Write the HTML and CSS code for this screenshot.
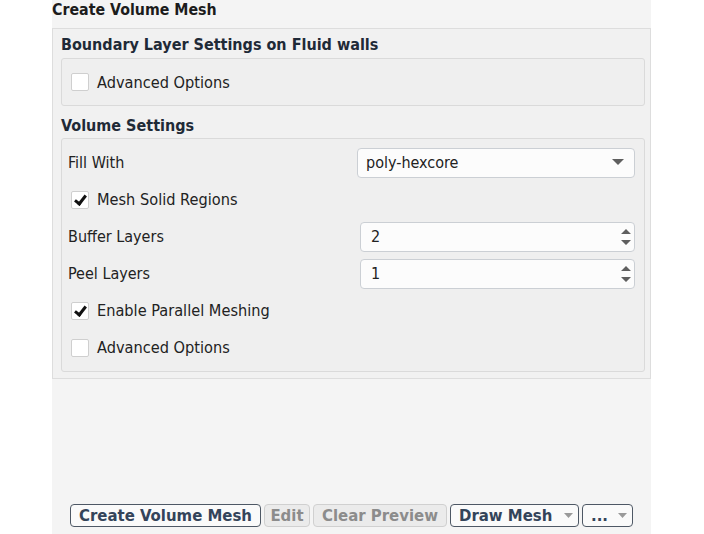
FILE: index.html
```html
<!DOCTYPE html>
<html lang="en">
<head>
  <meta charset="UTF-8">
  <title>Create Volume Mesh</title>
  <link rel="stylesheet" href="styles.css">
</head>
<body>
<div class="panel">
  <div class="panel-title">Create Volume Mesh</div>

  <div class="outer-group">
    <div class="group-title">Boundary Layer Settings on Fluid walls</div>
    <div class="group-box box-bl">
      <label class="check-row"><span class="check"></span>Advanced Options</label>
    </div>

    <div class="group-title title-vol">Volume Settings</div>
    <div class="group-box box-vol">
      <div class="row">
        <span class="label">Fill With</span>
        <div class="dropdown">
          <span>poly-hexcore</span>
          <svg width="12" height="7" viewBox="0 0 12 7"><path d="M0 0 H12 L6 6 Z" fill="#5f5f5f"/></svg>
        </div>
      </div>
      <div class="row">
        <label class="check-row"><span class="check on"></span>Mesh Solid Regions</label>
      </div>
      <div class="row">
        <span class="label">Buffer Layers</span>
        <div class="spin">
          <span>2</span>
          <svg width="12" height="18" viewBox="0 0 12 18"><path d="M1 6 L6 1 L11 6 Z M1 12 H11 L6 17 Z" fill="#5f5f5f"/></svg>
        </div>
      </div>
      <div class="row">
        <span class="label">Peel Layers</span>
        <div class="spin">
          <span>1</span>
          <svg width="12" height="18" viewBox="0 0 12 18"><path d="M1 6 L6 1 L11 6 Z M1 12 H11 L6 17 Z" fill="#5f5f5f"/></svg>
        </div>
      </div>
      <div class="row">
        <label class="check-row"><span class="check on"></span>Enable Parallel Meshing</label>
      </div>
      <div class="row">
        <label class="check-row"><span class="check"></span>Advanced Options</label>
      </div>
    </div>
  </div>

  <div class="actions">
    <button class="btn btn-create">Create Volume Mesh</button>
    <button class="btn off btn-edit">Edit</button>
    <button class="btn off btn-clear">Clear Preview</button>
    <button class="btn menu btn-draw">Draw Mesh <svg width="9" height="5" viewBox="0 0 9 5"><path d="M0 0 H9 L4.5 5 Z" fill="#9a9a9a"/></svg></button>
    <button class="btn menu btn-more">... <svg width="9" height="5" viewBox="0 0 9 5"><path d="M0 0 H9 L4.5 5 Z" fill="#9a9a9a"/></svg></button>
  </div>
</div>
</body>
</html>
```

FILE: styles.css
```css
body {
  margin: 0;
  background: #ffffff;
  font-family: "DejaVu Sans Condensed", "DejaVu Sans", sans-serif;
  font-size: 16px;
  color: #222;
}

.panel {
  margin-left: 52px;
  width: 599px;
  height: 534px;
  background: #f4f4f4;
  display: flex;
  flex-direction: column;
}

.panel-title {
  height: 28px;
  line-height: 20px;
  font-weight: bold;
  font-size: 15.8px;
  color: #1c1c1c;
}

.outer-group {
  border: 1px solid #dddddd;
  background: #f1f1f1;
  padding: 0 5px 6px 8px;
}

.group-title {
  height: 29px;
  line-height: 32px;
  font-weight: bold;
  color: #1f2a37;
}

.title-vol {
  height: 32px;
  line-height: 40px;
}

.group-box {
  border: 1px solid #dadada;
  border-radius: 3px;
  background: #efefef;
}

.box-bl {
  height: 46px;
  display: flex;
  align-items: center;
  padding-left: 9px;
}

.box-vol {
  padding: 5px 9px 5px 6px;
}

.row {
  height: 37px;
  display: grid;
  grid-template-columns: 1fr 278px;
  align-items: center;
}

.row .check-row {
  margin-left: 3px;
}

.check-row {
  display: flex;
  align-items: center;
  gap: 8px;
  font-size: 16.2px;
}

.check {
  width: 16px;
  height: 16px;
  border: 1px solid #cfcfcf;
  border-radius: 2px;
  background: #fff;
  position: relative;
}

/* the tick: a rotated corner */
.check.on::after {
  content: '';
  position: absolute;
  left: 5px;
  top: 1px;
  width: 4px;
  height: 9px;
  border: solid #111;
  border-width: 0 3px 3px 0;
  transform: rotate(38deg);
}

.dropdown, .spin {
  height: 28px;
  background: #fcfcfc;
  border: 1px solid #cbcfd4;
  border-radius: 4px;
  display: flex;
  align-items: center;
  justify-content: space-between;
  padding: 0 10px 0 8px;
}

.spin {
  margin-left: 3px;
  padding-right: 2px;
  padding-left: 10px;
}

.actions {
  margin-top: auto;
  margin-bottom: 7px;
  padding-left: 18px;
  display: flex;
  gap: 3px;
}

.btn {
  box-sizing: border-box;
  flex-shrink: 0;
  white-space: nowrap;
  height: 23px;
  padding: 0 4px;
  font-family: inherit;
  font-size: 16.6px;
  font-weight: bold;
  color: #34445a;
  background: #fafafa;
  border: 1px solid #4e5865;
  border-radius: 4px;
  display: flex;
  align-items: center;
  justify-content: center;
}

.btn.off {
  color: #8c8c8c;
  background: #ebebeb;
  border-color: #d0d0d0;
}

.btn.menu {
  justify-content: space-between;
  padding: 0 5px 0 8px;
}

.btn-create { width: 191px; }
.btn-edit { width: 46px; }
.btn-clear { width: 134px; }
.btn-draw { width: 129px; }
.btn-more { width: 51px; }
```
